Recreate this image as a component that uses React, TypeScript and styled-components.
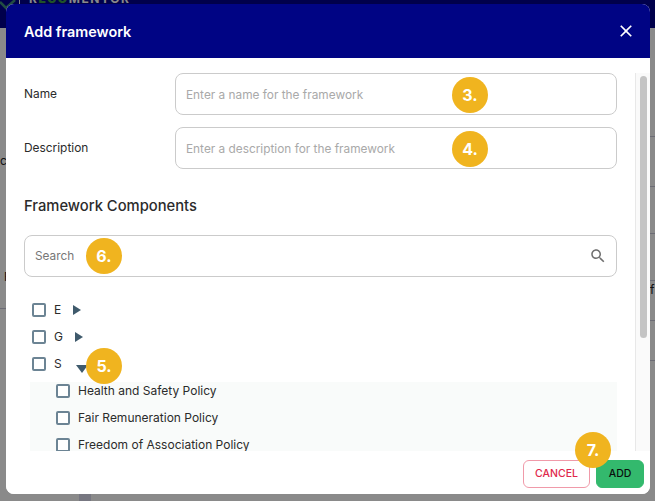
import styled, { createGlobalStyle } from "styled-components";

const GlobalStyle = createGlobalStyle`
  * {
    box-sizing: border-box;
  }
  html, body {
    margin: 0;
    height: 100%;
    overflow: hidden;
    background: #fff;
    font-family: Inter, "Liberation Sans", sans-serif;
  }
`;

const Page = styled.div`
  height: 501px;
  display: flex;
  flex-direction: column;
  overflow: hidden;
`;

const Nav = styled.div`
  height: 28px;
  flex: none;
  background: #00008b;
  display: flex;
  gap: 4px;
  overflow: hidden;
`;

const NavLogo = styled.svg`
  width: 16px;
  height: 10px;
  flex: none;
`;

const NavBar = styled.div`
  width: 1px;
  height: 4px;
  background: #fff;
  margin-left: -1px;
`;

const NavTitle = styled.div`
  margin: -9px 0 0 5px;
  font-size: 12px;
  line-height: 15px;
  font-weight: 700;
  letter-spacing: 1.55px;
  color: #fff;

  & b {
    color: #3a9a4a;
  }
`;

const Behind = styled.div`
  flex: 1;
  display: flex;
  justify-content: space-between;
  font-size: 12px;
  color: #222;
`;

const SideColumn = styled.div<{ $width: number }>`
  width: ${(p) => p.$width}px;
  overflow: hidden;
  display: flex;
  flex-direction: column;
`;

const BehindRow = styled.div<{ $height: number; $line?: boolean; $indent?: number }>`
  height: ${(p) => p.$height}px;
  flex: none;
  padding-left: ${(p) => p.$indent ?? 0}px;
  border-bottom: ${(p) => (p.$line ? "1px solid #c8c8d8" : "none")};
  display: flex;
  align-items: flex-end;
  line-height: 14px;
`;

const BottomBlock = styled.div`
  align-self: flex-end;
  width: 12px;
  height: 7px;
  margin-right: 486px;
  background: #dcdcee;
`;

const Overlay = styled.div`
  position: fixed;
  inset: 0;
  padding: 4px 5px 7px 6px;
  background: rgba(0, 0, 0, 0.46);
`;

const Modal = styled.div`
  height: 490px;
  display: flex;
  flex-direction: column;
  background: #fff;
  border-radius: 8px;
  overflow: hidden;
`;

const Header = styled.div`
  height: 54px;
  flex: none;
  padding: 0 14px 0 18px;
  display: flex;
  align-items: center;
  justify-content: space-between;
  background: #000484;
  color: #fff;
`;

const Title = styled.h1`
  margin: 0;
  font-size: 14.4px;
  font-weight: 600;
`;

const CloseIcon = styled.svg`
  width: 20px;
  height: 20px;
  fill: #fff;
`;

const ScrollFrame = styled.div`
  margin-top: 15px;
  height: 378px;
  flex: none;
  display: flex;
`;

const ScrollContent = styled.div`
  flex: 1;
  min-width: 0;
  padding: 0 18px;
  overflow: hidden;
`;

const ScrollTrack = styled.div`
  width: 15px;
  flex: none;
  padding: 3px 3px 0 4px;
  background: #fafafa;
  border-left: 1px solid #e8e8e8;
`;

const ScrollThumb = styled.div`
  height: 262px;
  background: #c4c4c4;
  border-radius: 4px;
`;

const Field = styled.div`
  display: grid;
  grid-template-columns: 151px 1fr;
  align-items: center;
  margin-bottom: 12px;
`;

const Label = styled.label`
  font-size: 11.9px;
  color: #2b2b2b;
  margin-top: -2px;
`;

const InputBox = styled.div`
  position: relative;
  height: 42px;
  padding: 0 10px;
  display: flex;
  align-items: center;
  border: 1px solid #cbcbcb;
  border-radius: 8px;
  background: #fff;
`;

const TextInput = styled.input<{ $muted?: boolean }>`
  flex: 1;
  min-width: 0;
  padding: 0;
  margin-top: ${(p) => (p.$muted ? 0 : 2)}px;
  border: none;
  outline: none;
  background: transparent;
  font: inherit;
  font-size: 11.85px;

  &::placeholder {
    color: ${(p) => (p.$muted ? "#777" : "#a9a9a9")};
    opacity: 1;
  }
`;

const SearchIcon = styled.svg`
  width: 18px;
  height: 18px;
  margin-right: -1px;
  fill: #6f6f6f;
`;

const SectionTitle = styled.h2`
  margin: 0;
  padding: 16px 0 20px;
  font-size: 14.75px;
  line-height: 18px;
  font-weight: 500;
  color: #2b2b2b;
`;

const Badge = styled.span<{ $left?: number; $top?: number }>`
  position: absolute;
  left: ${(p) => p.$left ?? 0}px;
  top: ${(p) => p.$top ?? 0}px;
  width: 36px;
  height: 36px;
  border-radius: 50%;
  background: #f0b41f;
  color: #fff;
  font-size: 16px;
  font-weight: 700;
  display: flex;
  align-items: center;
  justify-content: center;
  z-index: 2;
`;

const Tree = styled.div`
  padding-top: 19px;
`;

const TreeRow = styled.div`
  position: relative;
  height: 27px;
  padding-left: 8px;
  display: flex;
  align-items: center;
  font-size: 12px;
  color: #2b2b2b;
`;

const Checkbox = styled.span`
  width: 14px;
  height: 14px;
  flex: none;
  border: 2px solid #6c8494;
  border-radius: 2px;
  background: #fff;
`;

const RowLabel = styled.span`
  margin-left: 8px;
`;

const SubLabel = styled(RowLabel)`
  margin-top: -2px;
`;

const ArrowRight = styled.span<{ $gap: number }>`
  margin-left: ${(p) => p.$gap}px;
  width: 0;
  height: 0;
  border-style: solid;
  border-width: 5.5px 0 5.5px 8px;
  border-color: transparent transparent transparent #3f5a6c;
`;

const ArrowDown = styled.span`
  margin: 10px 0 0 14px;
  width: 0;
  height: 0;
  border-style: solid;
  border-width: 8px 6px 0 6px;
  border-color: #3f5a6c transparent transparent transparent;
`;

const SubList = styled.div`
  margin: 5px 0 0 6px;
  padding: 0 0 80px 26px;
  display: flex;
  flex-direction: column;
  gap: 9px;
  background: #f9fbfa;
`;

const SubRow = styled.div`
  height: 18px;
  display: flex;
  align-items: center;
  font-size: 12px;
  color: #2b2b2b;
`;

const Footer = styled.div`
  position: relative;
  flex: 1;
  padding: 2px 6px 0 0;
  display: flex;
  align-items: center;
  justify-content: flex-end;
  gap: 6px;
  background: #fff;
`;

const FooterButton = styled.button<{ $primary?: boolean }>`
  height: 28px;
  padding: 0;
  width: ${(p) => (p.$primary ? 48 : 67)}px;
  border-radius: 6px;
  border: 1px solid ${(p) => (p.$primary ? "#33b96d" : "#f09aa9")};
  background: ${(p) => (p.$primary ? "#33b96d" : "#fff")};
  color: ${(p) => (p.$primary ? "#0a0f0c" : "#e0274a")};
  font-family: inherit;
  font-size: 10.5px;
  font-weight: 500;
`;

const policies = [
  "Health and Safety Policy",
  "Fair Remuneration Policy",
  "Freedom of Association Policy",
];

const leftRows = [
  { height: 140, text: "c" },
  { height: 116, text: "F", indent: 4 },
  { height: 25, line: true },
];

const rightRows = [
  { height: 109, line: true },
  { height: 50, line: true },
  { height: 47, line: true },
  { height: 47, line: true },
  { height: 16, text: "f" },
  { height: 24, line: true },
  { height: 40, line: true },
];

const App = () => {
  return (
    <>
      <GlobalStyle />
      <Page>
        <Nav>
          <NavLogo viewBox="0 0 16 10">
            <path d="M0 2 L6 8 L15 0" fill="none" stroke="#3f8f7a" strokeWidth="2.5" />
          </NavLogo>
          <NavBar />
          <NavTitle>
            R<b>ECO</b>MENTOR
          </NavTitle>
        </Nav>
        <Behind>
          <SideColumn $width={6}>
            {leftRows.map((row, i) => (
              <BehindRow key={i} $height={row.height} $line={row.line} $indent={row.indent}>
                {row.text}
              </BehindRow>
            ))}
          </SideColumn>
          <BottomBlock />
          <SideColumn $width={5}>
            {rightRows.map((row, i) => (
              <BehindRow key={i} $height={row.height} $line={row.line}>
                {row.text}
              </BehindRow>
            ))}
          </SideColumn>
        </Behind>
      </Page>

      <Overlay>
        <Modal>
          <Header>
            <Title>Add framework</Title>
            <CloseIcon viewBox="0 0 24 24">
              <path d="M19 6.41L17.59 5 12 10.59 6.41 5 5 6.41 10.59 12 5 17.59 6.41 19 12 13.41 17.59 19 19 17.59 13.41 12z" />
            </CloseIcon>
          </Header>

          <ScrollFrame>
            <ScrollContent>
              <Field>
                <Label>Name</Label>
                <InputBox>
                  <TextInput placeholder="Enter a name for the framework" />
                  <Badge $left={276} $top={3}>3.</Badge>
                </InputBox>
              </Field>
              <Field>
                <Label>Description</Label>
                <InputBox>
                  <TextInput placeholder="Enter a description for the framework" />
                  <Badge $left={276} $top={3}>4.</Badge>
                </InputBox>
              </Field>

              <SectionTitle>Framework Components</SectionTitle>

              <InputBox>
                <TextInput $muted placeholder="Search" />
                <SearchIcon viewBox="0 0 24 24">
                  <path d="M15.5 14h-.79l-.28-.27C15.41 12.59 16 11.11 16 9.5 16 5.91 13.09 3 9.5 3S3 5.91 3 9.5 5.91 16 9.5 16c1.61 0 3.09-.59 4.23-1.57l.27.28v.79l5 4.99L20.49 19l-4.99-5zm-6 0C7.01 14 5 11.99 5 9.5S7.01 5 9.5 5 14 7.01 14 9.5 11.99 14 9.5 14z" />
                </SearchIcon>
                <Badge $left={61} $top={2}>6.</Badge>
              </InputBox>

              <Tree>
                <TreeRow>
                  <Checkbox />
                  <RowLabel>E</RowLabel>
                  <ArrowRight $gap={12} />
                </TreeRow>
                <TreeRow>
                  <Checkbox />
                  <RowLabel>G</RowLabel>
                  <ArrowRight $gap={12} />
                </TreeRow>
                <TreeRow>
                  <Checkbox />
                  <RowLabel>S</RowLabel>
                  <ArrowDown />
                  <Badge $left={62} $top={-2}>5.</Badge>
                </TreeRow>
                <SubList>
                  {policies.map((name) => (
                    <SubRow key={name}>
                      <Checkbox />
                      <SubLabel>{name}</SubLabel>
                    </SubRow>
                  ))}
                </SubList>
              </Tree>
            </ScrollContent>
            <ScrollTrack>
              <ScrollThumb />
            </ScrollTrack>
          </ScrollFrame>

          <Footer>
            <FooterButton>CANCEL</FooterButton>
            <FooterButton $primary>ADD</FooterButton>
            <Badge $left={569} $top={-19}>7.</Badge>
          </Footer>
        </Modal>
      </Overlay>
    </>
  );
};

export default App;
